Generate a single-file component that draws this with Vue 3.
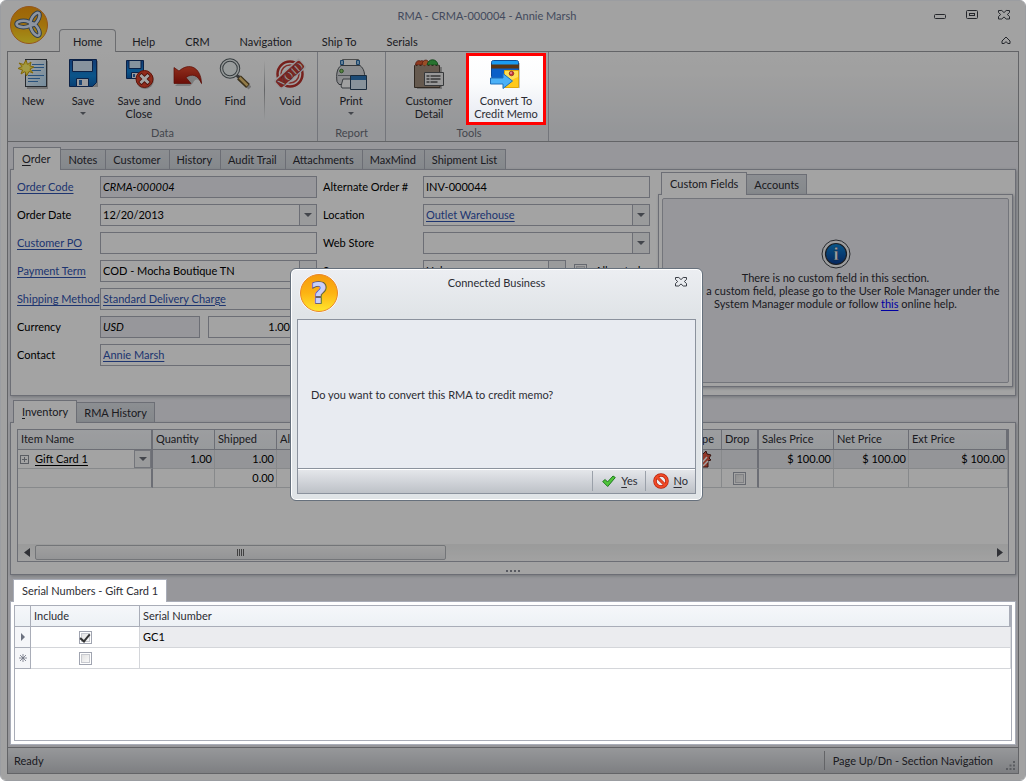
<script setup>
import { ref } from 'vue'

const menu = ['Home', 'Help', 'CRM', 'Navigation', 'Ship To', 'Serials']
const orderTabs = ['Notes', 'Customer', 'History', 'Audit Trail', 'Attachments', 'MaxMind', 'Shipment List']

const orderCode = ref('CRMA-000004')
const orderDate = ref('12/20/2013')
const customerPo = ref('')
const currency = ref('USD')
const rate = ref('1.00')
const alternate = ref('INV-000044')
const allocated = ref(false)
const dropped = ref(false)
const serials = ref([
  { id: 'a', marker: 'current', include: true, number: 'GC1' },
  { id: 'b', marker: 'new', include: false, number: '' }
])
</script>

<template>
  <div class="window">
    <header class="titlebar">
      <button class="orb" aria-label="Application menu">
        <svg width="40" height="40" viewBox="0 0 40 40">
          <defs>
            <linearGradient id="gold" x1="0" y1="0" x2="0" y2="1">
              <stop offset="0" stop-color="#f59b0c" /><stop offset=".5" stop-color="#fdb313" /><stop offset="1" stop-color="#ffe72e" />
            </linearGradient>
          </defs>
          <circle cx="20" cy="20" r="18.5" fill="url(#gold)" stroke="#e8862a" />
          <g fill="none" stroke="#47617e" stroke-width="4.4">
            <ellipse cx="14.5" cy="19" rx="7" ry="3.2" />
            <ellipse cx="26" cy="14" rx="7" ry="3.2" transform="rotate(-58 26 14)" />
            <ellipse cx="26" cy="24.5" rx="7" ry="3.2" transform="rotate(58 26 24.5)" />
          </g>
          <g fill="none" stroke="#dfeafa" stroke-width="2.6">
            <ellipse cx="14.5" cy="19" rx="7" ry="3.2" />
            <ellipse cx="26" cy="14" rx="7" ry="3.2" transform="rotate(-58 26 14)" />
            <ellipse cx="26" cy="24.5" rx="7" ry="3.2" transform="rotate(58 26 24.5)" />
          </g>
        </svg>
      </button>
      <div class="title-row">
        <h1>RMA - CRMA-000004 - Annie Marsh</h1>
        <div class="controls">
          <button aria-label="Minimize"><svg width="12" height="12" viewBox="0 0 12 12"><rect x=".5" y="5.500" width="11" height="4" rx="1" /></svg></button>
          <button aria-label="Restore"><svg width="12" height="12" viewBox="0 0 12 12"><rect x=".5" y="1.500" width="11" height="8" rx="1" /><rect x="3.500" y="4.500" width="5" height="2" /></svg></button>
          <button aria-label="Close"><svg width="12" height="12" viewBox="0 0 12 12"><path d="M.5 1.500h3.300L6 3.600l2.200-2.100h3.300v2L9.300 5.500l2.200 2v2.500H8.200L6 7.900 3.800 10H.5V7.500l2.200-2-2.200-2z" /></svg></button>
        </div>
      </div>
      <nav class="menu">
        <a v-for="(m, i) in menu" :key="m" href="#" :class="{ active: i === 0 }">{{ m }}</a>
        <button class="collapse" aria-label="Collapse ribbon"><svg width="10" height="9" viewBox="0 0 10 9"><path d="M5 1l4 4v2.500H7L5 5.700 3 7.500H1V5z" /></svg></button>
      </nav>
    </header>

    <div class="frame">
      <section class="ribbon">
        <div class="group data">
          <div class="tools">
            <button class="tool w50">
              <svg width="32" height="32" viewBox="0 0 32 32">
                <defs><linearGradient id="sheet" x1="0" y1="0" x2="1" y2="1"><stop offset="0" stop-color="#fff" /><stop offset="1" stop-color="#b5dbf5" /></linearGradient></defs>
                <rect x="10" y="3" width="21" height="28" fill="#777" opacity=".5" />
                <rect x="8.500" y="1.500" width="21" height="27" fill="url(#sheet)" stroke="#3a4048" />
                <path d="M15 6.500h12M15 9.500h12M15 12.500h9M11 17.500h16M11 20.500h12M11 23.500h10" stroke="#3f80c4" />
                <path d="M9 2l1.500 4.500L14 4l-1 4 4 1-4 2 3 4-4-1.500L9.500 18 8 13.500 4 16l1.500-4L1 10.500 5 8.500 2 5l4.500 1.500z" fill="#ffe84a" stroke="#caa30e" />
                <circle cx="9" cy="10" r="3.500" fill="#fff36b" />
              </svg>
              <span>New</span>
            </button>
            <button class="tool w50">
              <svg width="32" height="32" viewBox="0 0 32 32">
                <defs><linearGradient id="disk" x1="0" y1="0" x2="0" y2="1"><stop offset="0" stop-color="#1c5fb8" /><stop offset=".6" stop-color="#1285d8" /><stop offset="1" stop-color="#0c62b4" /></linearGradient></defs>
                <path d="M4 3h27v26H7z" fill="#777" opacity=".5" />
                <path d="M2.500 1.500h27v23l-4 4h-23z" fill="url(#disk)" stroke="#12356e" />
                <path d="M5.500 2.500h20v11h-20z" fill="#d3e7f7" stroke="#12356e" />
                <path d="M9.500 20.500h12v8h-12z" fill="#f2f5f8" stroke="#12356e" /><path d="M12 22h3v5h-3z" fill="#2d6cb5" />
              </svg>
              <span>Save</span><i class="caret"></i>
            </button>
            <button class="tool w62">
              <svg width="32" height="32" viewBox="0 0 32 32">
                <path d="M3.500 2.500h17v18h-17z" fill="url(#disk)" stroke="#12356e" />
                <path d="M6 2.500h12v8H6z" fill="#d3e7f7" stroke="#12356e" /><path d="M8.500 14.500h7v6h-7z" fill="#f2f5f8" stroke="#12356e" /><path d="M10 16h2v3h-2z" fill="#2d6cb5" />
                <circle cx="22" cy="22" r="9" fill="#777" opacity=".5" />
                <circle cx="21.500" cy="21" r="8.500" fill="#e2432b" stroke="#97200f" />
                <path d="M18.500 18l6 6m0-6l-6 6" stroke="#7b1b0d" stroke-width="4.600" stroke-linecap="square" /><path d="M18.500 18l6 6m0-6l-6 6" stroke="#fff" stroke-width="3" stroke-linecap="square" />
              </svg>
              <span>Save and<br />Close</span>
            </button>
            <button class="tool w36">
              <svg width="32" height="32" viewBox="0 0 32 32">
                <defs><linearGradient id="red" x1="0" y1="0" x2="0" y2="1"><stop offset="0" stop-color="#e04a2e" /><stop offset="1" stop-color="#a8160b" /></linearGradient></defs>
                <path d="M3 28h15l3-3c2-5 6-5 9 2-1-9-6-15-13-13z" fill="#777" opacity=".4" />
                <path d="M2 9.500l5 3.500c10-9 22-4 22.500 12.500C26 17 20 15 14 19.500l5 6H2z" fill="url(#red)" stroke="#8b1208" stroke-width=".7" />
              </svg>
              <span>Undo</span>
            </button>
            <button class="tool w58">
              <svg width="32" height="32" viewBox="0 0 32 32">
                <path d="M19 18l12 12" stroke="#777" stroke-width="4" opacity=".5" />
                <path d="M16.500 16l4 4" stroke="#555" stroke-width="3" /><path d="M20 19.500l9 8.500" stroke="#5d4b26" stroke-width="5.500" /><path d="M20.500 19.500l8 8" stroke="#e4c070" stroke-width="2.500" />
                <circle cx="11" cy="10.500" r="8.500" fill="#e6f0f2" fill-opacity=".6" stroke="#555f63" stroke-width="3.500" /><circle cx="11" cy="10.500" r="8.500" fill="none" stroke="#e8eeee" stroke-width="1.500" />
              </svg>
              <span>Find</span>
            </button>
            <div class="divider"></div>
            <button class="tool w50">
              <svg width="32" height="32" viewBox="0 0 32 32">
                <circle cx="16" cy="16" r="12.500" fill="none" stroke="#b9322c" stroke-width="2.500" />
                <circle cx="16" cy="16" r="9" fill="none" stroke="#cc4a43" stroke-width="1.500" />
                <g transform="rotate(-42 16 16)"><rect x="-1" y="10" width="34" height="12" fill="#ecedf0" /><rect x="0" y="11.500" width="32" height="9" rx="2" fill="#c63a33" /><text x="16" y="20.500" text-anchor="middle" font-size="12" font-weight="700" fill="#f6e6e4" stroke="#8e1a15" stroke-width=".5" font-family="Liberation Serif">VOID</text></g>
              </svg>
              <span>Void</span>
            </button>
          </div>
          <p>Data</p>
        </div>
        <div class="group report">
          <div class="tools">
            <button class="tool w66">
              <svg width="32" height="32" viewBox="0 0 32 32">
                <path d="M7.500 7V1.500h16V7" fill="#f6f6f6" stroke="#777" /><path d="M5.500 2.500h3v4h-3zM21.500 2.500h3v4h-3z" fill="#9cc8ec" stroke="#2a6aa5" />
                <path d="M6 7.500h19c4 3 5 8 4.500 13v4l-2 2H4l-2-3c-1-7 0-13 4-16z" fill="#d9dcdf" stroke="#50555b" />
                <path d="M3 17.500h26" stroke="#7d8388" /><circle cx="6.500" cy="13" r="1.800" fill="#8fce6a" stroke="#3f7a35" />
                <path d="M6 28l2-7h10v9H7z" fill="#fafafa" stroke="#5b6066" />
                <path d="M15.500 17.500h16v14h-16z" fill="#d5e6f2" stroke="#28445f" /><path d="M16 18h15v4H16z" fill="#2d76b9" />
              </svg>
              <span>Print</span><i class="caret"></i>
            </button>
          </div>
          <p>Report</p>
        </div>
        <div class="group last">
          <div class="tools">
            <button class="tool w74">
              <svg width="32" height="32" viewBox="0 0 32 32">
                <path d="M4 9h25v22H4z" fill="#777" opacity=".5" />
                <path d="M1.500 7.500h25l.5 22H1.500z" fill="#a08e7c" stroke="#4c4036" />
                <path d="M2.500 7c0-4 3-5 5-4 2-1 4 0 5 4z" fill="#e05a30" stroke="#7c2412" stroke-width=".8" /><path d="M9 6c1-5 6-5 7-1l-1 3h-5z" fill="#ef7a3e" stroke="#7c2412" stroke-width=".8" /><path d="M14 7c1-7 10-7 11 0z" fill="#3fb54a" stroke="#17631f" stroke-width=".8" />
                <path d="M2 6.500l1.500 2 2-2 2 2 2-2 2 2 2-2 2 2 2-2 2 2 2-2 2 2 2-2V11H2z" fill="#a08e7c" />
                <path d="M11.500 14.500h19v13h-19z" fill="#f0f0f0" stroke="#55585c" /><path d="M13.500 18h3m1 0h10M13.500 21h3m1 0h10M13.500 24h3m1 0h7" stroke="#555" stroke-width="1.300" />
              </svg>
              <span>Customer<br />Detail</span>
            </button>
            <button class="tool convert">
              <svg width="32" height="32" viewBox="0 0 32 32">
                <path d="M4 5h26v25H16V21H4z" fill="#777" opacity=".4" />
                <rect x="1.500" y="2.500" width="27" height="18" rx="2" fill="#0a5fc8" stroke="#0c4a97" /><path d="M2 4q0-1 1-1h24q1 0 1 1v3H2z" fill="#1b9bf3" /><path d="M1 6.500h28v4H1z" fill="#5b3413" />
                <path d="M14.500 12.500h14v17h-14z" fill="#ffe054" stroke="#e1a90e" /><path d="M15 25l13-6v10H15z" fill="#ffc91a" />
                <circle cx="21.500" cy="15.500" r="2.300" fill="#c8323a" stroke="#6c1c20" stroke-width=".6" /><circle cx="21" cy="15" r=".8" fill="#ffe3e3" />
                <path d="M.5 20H13v-4.500l9.500 7.500-9.500 7.500V26H.5z" fill="#4ab0f7" stroke="#1e6fb9" />
              </svg>
              <span>Convert To<br />Credit Memo</span>
            </button>
          </div>
          <p>Tools</p>
        </div>
      </section>

      <main class="workspace">
        <div class="tabs roomy">
          <button class="tab active"><u>O</u>rder</button>
          <button v-for="t in orderTabs" :key="t" class="tab">{{ t }}</button>
        </div>
        <section class="panel order">
          <form class="fields" @submit.prevent>
            <label for="code"><a href="#">Order Code</a></label>
            <input id="code" v-model="orderCode" class="box readonly" readonly />
            <label for="alt">Alternate Order #</label>
            <input id="alt" v-model="alternate" class="box" />

            <label for="date">Order Date</label>
            <div class="box combo"><input id="date" v-model="orderDate" /><button type="button" class="arrow" aria-label="Pick date"><i class="caret"></i></button></div>
            <label for="loc">Location</label>
            <div class="box combo"><select id="loc" class="linked"><option>Outlet Warehouse</option></select><span class="arrow"><i class="caret"></i></span></div>

            <label for="po"><a href="#">Customer PO</a></label>
            <input id="po" v-model="customerPo" class="box" />
            <label for="store">Web Store</label>
            <div class="box combo"><select id="store"><option></option></select><span class="arrow"><i class="caret"></i></span></div>

            <label for="term"><a href="#">Payment Term</a></label>
            <div class="box combo"><select id="term"><option>COD - Mocha Boutique TN</option></select><span class="arrow"><i class="caret"></i></span></div>
            <label for="source">Source</label>
            <div class="pair source">
              <div class="box combo"><select id="source"><option>Unknown</option></select><span class="arrow"><i class="caret"></i></span></div>
              <label class="tick"><input v-model="allocated" type="checkbox" class="check" />Allocated</label>
            </div>

            <label for="ship"><a href="#">Shipping Method</a></label>
            <div class="box combo"><select id="ship" class="linked"><option>Standard Delivery Charge</option></select><span class="arrow"><i class="caret"></i></span></div>
            <span></span><span></span>

            <label for="cur">Currency</label>
            <div class="pair">
              <input id="cur" v-model="currency" class="box readonly cur" readonly />
              <input v-model="rate" class="box num" aria-label="Exchange rate" />
            </div>
            <span></span><span></span>

            <label for="contact">Contact</label>
            <div class="box combo"><select id="contact" class="linked"><option>Annie Marsh</option></select><span class="arrow"><i class="caret"></i></span></div>
          </form>
          <div class="custom">
            <div class="tabs">
              <button class="tab active">Custom Fields</button>
              <button class="tab">Accounts</button>
            </div>
            <div class="panel custom-panel">
              <div class="notice">
                <svg width="30" height="30" viewBox="0 0 30 30">
                  <defs><linearGradient id="info" x1="0" y1="0" x2="0" y2="1"><stop offset="0" stop-color="#0d87d8" /><stop offset="1" stop-color="#0a3c93" /></linearGradient></defs>
                  <circle cx="15" cy="15" r="14" fill="#f5f6f8" stroke="#3d4148" /><circle cx="15" cy="15" r="10.500" fill="url(#info)" stroke="#2c3038" stroke-width="1.200" />
                  <text x="15" y="21" text-anchor="middle" font-family="Liberation Serif" font-weight="700" font-size="18" fill="#fff" stroke="#20304c" stroke-width=".4">i</text>
                </svg>
                <p>There is no custom field in this section.<br />To add a custom field, please go to the User Role Manager under the<br />System Manager module or follow <a href="#">this</a> online help.</p>
              </div>
            </div>
          </div>
        </section>

        <div class="tabs second">
          <button class="tab active"><u>I</u>nventory</button>
          <button class="tab">RMA History</button>
        </div>
        <section class="panel inventory">
          <div class="grid-box">
            <table class="items">
              <colgroup><col class="c-item" /><col class="c-qty" /><col class="c-qty" /><col class="c-qty" /><col /><col class="c-drop" /><col class="c-drop" /><col class="c-price" /><col class="c-price" /><col class="c-ext" /></colgroup>
              <thead><tr><th class="thick">Item Name</th><th>Quantity</th><th>Shipped</th><th>Allocated</th><th></th><th class="right">Type</th><th class="thick">Drop</th><th>Sales Price</th><th>Net Price</th><th class="thick">Ext Price</th></tr></thead>
              <tbody>
                <tr class="selected">
                  <td class="thick item"><div class="item-cell"><button class="plus" aria-label="Expand"></button><a href="#">Gift Card 1</a><button class="arrow" aria-label="Choose item"><i class="caret"></i></button></div></td>
                  <td>1.00</td><td>1.00</td><td></td><td></td>
                  <td class="mid"><svg width="18" height="18" viewBox="0 0 18 18"><path d="M2 3l3 1 2-3 2 3 3-3 1 3 4 1-2 3 2 2-3 1v6H4v-6L1 10l2-3z" fill="#e0563f" stroke="#52201a" /><path d="M5 16l8-9M9 16l5-5" stroke="#fff" stroke-width="1.500" /></svg></td>
                  <td class="thick"></td><td>$ 100.00</td><td>$ 100.00</td><td>$ 100.00</td>
                </tr>
                <tr><td class="thick"></td><td></td><td>0.00</td><td></td><td></td><td></td><td class="thick mid"><input v-model="dropped" type="checkbox" class="check" aria-label="Drop ship" /></td><td></td><td></td><td></td></tr>
              </tbody>
            </table>
            <div class="scroll">
              <button aria-label="Scroll left"><svg width="6" height="9" viewBox="0 0 6 9"><path d="M6 0v9L0 4.500z" /></svg></button>
              <div class="track"><div class="thumb"><i></i><i></i><i></i><i></i></div></div>
              <button aria-label="Scroll right"><svg width="6" height="9" viewBox="0 0 6 9"><path d="M0 0v9l6-4.500z" /></svg></button>
            </div>
          </div>
          <div class="splitter"><i></i><i></i><i></i><i></i></div>
        </section>

        <section class="serial">
          <div class="tabs"><button class="tab active">Serial Numbers - Gift Card 1</button></div>
          <div class="panel serial-panel">
            <div class="grid-box">
              <table class="serials">
                <colgroup><col class="c-mark" /><col class="c-inc" /><col /></colgroup>
                <thead><tr><th></th><th>Include</th><th class="thick">Serial Number</th></tr></thead>
                <tbody>
                  <tr v-for="s in serials" :key="s.id" :class="s.marker">
                    <td class="mark">
                      <svg v-if="s.marker === 'current'" width="8" height="8" viewBox="0 0 8 8"><path d="M2 0v8l4-4z" fill="#6d7280" /></svg>
                      <svg v-else width="8" height="8" viewBox="0 0 8 8"><path d="M4 0v8M0 4h8M1 1l6 6M7 1L1 7" stroke="#6d7280" stroke-width=".8" /></svg>
                    </td>
                    <td class="mid"><input v-model="s.include" type="checkbox" class="check" aria-label="Include" /></td>
                    <td class="num-cell">{{ s.number }}</td>
                  </tr>
                </tbody>
              </table>
            </div>
          </div>
        </section>
      </main>

      <footer class="status">
        <span>Ready</span>
        <span class="hint">Page Up/Dn - Section Navigation</span>
        <svg width="10" height="10" viewBox="0 0 10 10"><path d="M7 0h2v2H7zM3.500 3.500h2v2h-2zM7 3.500h2v2H7zM0 7h2v2H0zM3.500 7h2v2h-2zM7 7h2v2H7z" fill="#90939a" /></svg>
      </footer>
    </div>

    <div class="shade"></div>

    <div class="dialog" role="dialog" aria-label="Connected Business">
      <header>
        <svg width="40" height="40" viewBox="0 0 40 40">
          <circle cx="20" cy="20" r="19.500" fill="#fff" /><circle cx="20" cy="20" r="18.500" fill="url(#gold)" stroke="#e8862a" />
          <text x="20" y="30" text-anchor="middle" font-family="DejaVu Sans" font-weight="700" font-size="28" fill="#c9cffb" stroke="#4a4f80" stroke-width="1.600" paint-order="stroke">?</text>
        </svg>
        <h2>Connected Business</h2>
        <button class="close" aria-label="Close"><svg width="12" height="12" viewBox="0 0 12 12"><path d="M.5 1.500h3.300L6 3.600l2.200-2.100h3.300v2L9.300 5.500l2.200 2v2.500H8.200L6 7.900 3.800 10H.5V7.500l2.200-2-2.200-2z" /></svg></button>
      </header>
      <div class="dialog-body">
        <p>Do you want to convert this RMA to credit memo?</p>
        <div class="actions">
          <button class="yes">
            <svg width="14" height="14" viewBox="0 0 14 14"><path d="M.7 7.500l2.500-2 2.300 2.500L11 2l2.300 1.500-7.600 9z" fill="#4fc43a" stroke="#1d7a1d" /></svg>
            <span><u>Y</u>es</span>
          </button>
          <button class="no">
            <svg width="16" height="16" viewBox="0 0 16 16"><circle cx="8" cy="8" r="6" fill="#eceef1" stroke="#b3200c" stroke-width="3.500" /><path d="M4 4l8 8" stroke="#b3200c" stroke-width="3" /><circle cx="8" cy="8" r="6" fill="none" stroke="#f04a26" stroke-width="2.200" /><path d="M4 4l8 8" stroke="#f04a26" stroke-width="2" /></svg>
            <span><u>N</u>o</span>
          </button>
        </div>
      </div>
    </div>
  </div>
</template>

<style>
html, body { background: #fff; }
</style>

<style scoped>
* { box-sizing: border-box; }
.window {
  --line: #a9adb8;
  position: relative;
  min-height: 100vh;
  display: flex;
  flex-direction: column;
  padding: 0 6px 6px;
  border: 1px solid #9b9da1;
  border-radius: 6px;
  background: #fdfdfd;
  overflow: hidden;
  font: 11px/13px Lato, "Liberation Sans", sans-serif;
  color: #2c2c33;
}
button, input, select { font: inherit; color: inherit; margin: 0; }
button { padding: 0; border: 0; background: none; }
h1, h2, p { margin: 0; font: inherit; }
svg { display: block; flex: none; }
u { text-underline-offset: 2px; }
.titlebar { display: grid; grid-template-columns: 52px 1fr; grid-template-rows: 28px 22px; }
.orb { grid-row: 1 / 3; justify-self: start; align-self: start; margin: 4px 0 0 2px; }
.title-row { display: flex; align-items: center; }
.title-row h1 { flex: 1; text-align: center; color: #6a7592; }
.controls { display: flex; justify-content: flex-end; gap: 20px; width: 104px; padding-right: 9px; }
.controls svg, .collapse svg, .close svg { fill: none; stroke: #3a3e46; }
.menu { display: flex; align-items: stretch; position: relative; }
.menu a { display: flex; align-items: center; padding: 2px 14px 0; border: 1px solid transparent; border-bottom: 0; color: inherit; text-decoration: none; }
.menu a.active { margin: 0 1px -1px 0; padding: 2px 13px; border-color: #a9abb0; border-radius: 4px 4px 0 0; background: #fdfdfd; position: relative; }
.collapse { margin-left: auto; padding-right: 8px; }
.frame { flex: 1; display: flex; flex-direction: column; border: 1px solid #9b9da1; }
.ribbon { display: flex; height: 90px; border-bottom: 1px solid #9b9da1; background: linear-gradient(#fdfdfd, #fafafa 25%, #e9ebef 90%); }
.group { display: flex; flex-direction: column; justify-content: space-between; border-right: 1px solid #b5b8c0; }
.group > p { text-align: center; color: #6b6f7a; padding-bottom: 2px; }
.tools { display: flex; }
.data { width: 310px; }
.report { width: 68px; }
.last { padding: 0 2px 0 6px; }
.tool { display: flex; flex-direction: column; align-items: center; gap: 4px; height: 73px; padding-top: 6px; white-space: nowrap; }
.w36 { width: 36px; } .w50 { width: 50px; } .w58 { width: 58px; } .w62 { width: 62px; } .w66 { width: 66px; } .w74 { width: 74px; }
.convert { position: relative; z-index: 3; width: 80px; height: 72px; margin-top: 1px; padding-top: 2px; border: 3px solid #f00; background: linear-gradient(#fff, #fbfcfd 40%, #e7eaf2); }
.divider { width: 1px; height: 60px; margin-top: 8px; background: linear-gradient(transparent, #9b9da1, transparent); }
.caret { display: block; width: 0; height: 0; border: 4px solid transparent; border-top-color: #6a6e78; border-bottom: 0; }
.tool .caret { border-width: 3px; border-bottom: 0; margin-top: 1px; }
.workspace { flex: 1; display: flex; flex-direction: column; padding: 5px 2px 2px; background: #ecedf3; }
.tabs { display: flex; align-items: flex-end; height: 22px; padding-left: 3px; flex: none; }
.tab { height: 20px; padding: 0 7px; border: 1px solid var(--line); border-left: 0; border-bottom: 0; background: linear-gradient(#dbdfe4, #d0d5db); white-space: nowrap; }
.tab.active { position: relative; height: 23px; margin-bottom: -1px; padding: 0 8px 2px; border-left: 1px solid var(--line); background: #fff; }
.roomy .tab { padding: 0 8px 0 7px; }
.roomy .tab.active { padding: 0 10px 2px 8px; }
.panel { border: 1px solid var(--line); background: #fff; box-shadow: 1px 1px 3px #b5b7bd; }
.order { display: flex; gap: 8px; min-height: 227px; padding: 2px 2px 8px 6px; }
.fields { display: grid; grid-template-columns: 83px 223px 100px 227px; row-gap: 6px; grid-auto-rows: 22px; align-items: center; padding-top: 4px; color: #000; }
.fields > :nth-child(4n + 2) { width: 217px; }
.fields label { white-space: nowrap; padding-bottom: 1px; }
a { color: #3053af; text-underline-offset: 2px; }
.box { width: 100%; height: 22px; padding: 0 2px 1px; border: 1px solid var(--line); background: #fff; color: #000; border-radius: 0; line-height: 18px; }
.readonly { background: #ecedf3; font-style: italic; }
.combo { display: grid; grid-template-columns: 1fr 17px; padding: 0; }
.combo input, .combo select { grid-row: 1; grid-column: 1 / 3; width: 100%; height: 20px; padding: 0 2px 1px; border: 0; background: none; appearance: none; color: #000; line-height: 18px; }
.fields .linked { color: #3053af; text-decoration: underline; text-underline-offset: 2px; }
.arrow { display: flex; align-items: center; justify-content: center; width: 17px; border-left: 1px solid var(--line); background: #f1f2f5; }
.combo .arrow { grid-row: 1; grid-column: 2; pointer-events: none; }
.pair { display: flex; gap: 8px; align-items: center; }
.pair .cur { width: 100px; }
.pair .num { flex: 1; width: 0; text-align: right; padding-right: 26px; }
.source .box { width: 143px; }
.tick { display: flex; align-items: center; gap: 8px; }
.check { appearance: none; display: inline-grid; place-items: center; flex: none; width: 13px; height: 13px; border: 1px solid #a0a4b0; background: linear-gradient(135deg, #dcdcdc, #fff); box-shadow: inset 0 0 0 1px #fff, inset 0 0 0 2px #c8cad0; vertical-align: middle; }
.check:checked::after { content: ""; width: 4px; height: 8px; margin-bottom: 2px; border: solid #333; border-width: 0 2px 2px 0; transform: rotate(40deg); }
.custom { flex: 1; min-width: 0; display: flex; flex-direction: column; }
.custom-panel { flex: 1; padding: 3px; }
.notice { height: 100%; padding-top: 40px; border: 1px solid #b5b8c0; border-radius: 2px; background: #ecedf3; text-align: center; }
.notice svg { margin: 0 auto 2px; }
.notice a { color: #00f; }
.second { margin-top: 4px; }
.inventory { padding: 6px 6px 0; }
.grid-box { border: 1px solid var(--line); background: #fff; }
.inventory .grid-box { display: flex; flex-direction: column; justify-content: space-between; height: 133px; }
table { width: 100%; table-layout: fixed; border-collapse: separate; border-spacing: 0; white-space: nowrap; }
th { height: 20px; padding: 0 3px 2px; border-right: 1px solid var(--line); border-bottom: 1px solid var(--line); background: linear-gradient(#f5f7fa, #edf1f5); font-weight: 400; text-align: left; overflow: hidden; }
th.right { text-align: right; padding-right: 7px; }
td { height: 19px; padding: 0 2px 1px; border-right: 1px solid #d4d6da; border-bottom: 1px solid #d4d6da; text-align: right; color: #000; }
.thick { border-right: 2px solid var(--line); }
.selected td { background: #e8e9ee; }
.items .item { padding: 0; background: #fff; }
.item-cell { display: flex; align-items: center; height: 18px; padding-left: 2px; }
.item-cell a { color: #000; margin-left: 6px; padding-bottom: 2px; flex: 1; text-align: left; }
.item-cell .arrow { height: 18px; border: 1px solid #b5b8c0; }
.plus { width: 9px; height: 9px; border: 1px solid #8e929c; background: linear-gradient(#8e929c, #8e929c) center / 5px 1px no-repeat, linear-gradient(#8e929c, #8e929c) center / 1px 5px no-repeat; }
td.mid { padding: 0; text-align: center; line-height: 0; }
.mid svg { margin: 0 auto; }
.c-item { width: 135px; } .c-qty { width: 62px; } .c-drop { width: 37px; } .c-price { width: 75px; } .c-ext { width: 99px; }
.scroll { display: flex; height: 17px; background: linear-gradient(#f1f2f2, #fdfdfd); }
.scroll button { display: flex; align-items: center; justify-content: center; width: 17px; fill: #4b4e55; }
.track { flex: 1; padding-top: 1px; }
.thumb { display: flex; justify-content: center; align-items: center; gap: 1px; width: 43%; height: 15px; border: 1px solid #b5b7bc; border-radius: 2px; background: linear-gradient(#fafafa, #e8e9eb); }
.thumb i { width: 1px; height: 7px; background: #666; }
.splitter { display: flex; justify-content: center; gap: 2px; height: 12px; padding: 8px 0 2px; }
.splitter i { width: 2px; background: #8a8e98; }
.serial { position: relative; z-index: 2; flex: 1; display: flex; flex-direction: column; padding-top: 4px; }
.serial-panel { flex: 1; display: flex; padding: 3px; box-shadow: none; }
.serial .grid-box { flex: 1; }
.serials th { height: 21px; }
.serials td { height: 21px; }
.serials .mark { padding: 0; border-color: var(--line); background: #f5f6f9; }
.mark svg { margin: 0 auto; }
.serials .num-cell { padding-left: 3px; text-align: left; }
.current .num-cell { background: #ebecef; }
.c-mark { width: 16px; } .c-inc { width: 109px; }
.status { display: flex; align-items: center; height: 26px; padding: 0 2px 0 6px; border-top: 1px solid #9b9da1; background: linear-gradient(#eceef1, #c5c7cc); }
.hint { margin-left: auto; padding: 3px 13px 3px 8px; border-left: 1px solid #9b9da1; }
.status svg { align-self: flex-end; margin-bottom: 2px; }
.shade { position: absolute; inset: 0; z-index: 1; background: rgba(0, 0, 0, .36); pointer-events: none; }
.dialog { position: absolute; z-index: 4; top: 267px; left: 289px; width: 413px; height: 233px; display: flex; flex-direction: column; padding: 0 6px 6px; border: 1px solid #66707c; border-radius: 6px; background: linear-gradient(#eceef2, #e0e4e7 20%); box-shadow: inset 0 0 0 1px #fff; }
.dialog header { display: grid; grid-template-columns: 40px 1fr 40px; height: 50px; padding: 4px 2px 0; }
.dialog h2 { text-align: center; padding: 3px 0; }
.close { justify-self: end; align-self: start; margin: 3px 7px 0 0; }
.dialog-body { flex: 1; display: flex; flex-direction: column; border: 1px solid #8b929d; background: #e8ebf1; }
.dialog-body > p { flex: 1; display: flex; align-items: center; padding-left: 13px; }
.actions { display: flex; justify-content: flex-end; height: 25px; border-top: 1px solid #8b929d; box-shadow: inset 0 1px #fff; background: linear-gradient(#e6e8ec, #bdc1c7); }
.actions button { display: flex; align-items: center; gap: 5px; margin: 2px 0; border-left: 1px solid #9aa0a9; padding: 0 7px 0 9px; }
.actions span { padding-bottom: 2px; }
.actions .no { padding-left: 7px; }
</style>
